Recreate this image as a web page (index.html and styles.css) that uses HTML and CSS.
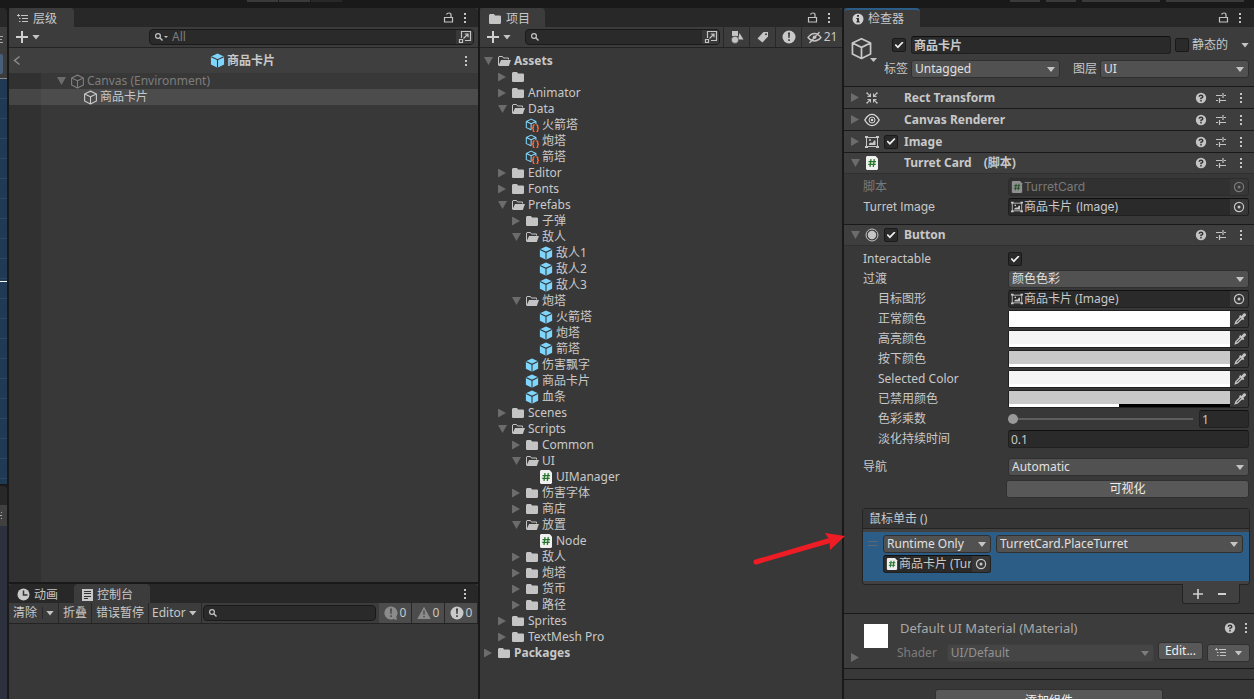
FILE: index.html
```html
<!DOCTYPE html>
<html lang="zh-CN">
<head>
<meta charset="utf-8">
<title>商品卡片</title>
<link rel="stylesheet" href="styles.css">
</head>
<body>
<svg class="defs" aria-hidden="true">
  <symbol id="i-folder" viewBox="0 0 14 14"><path fill="#c4c4c4" d="M1 3 2 2h4l1 1.400h5.200l.8.800V11l-.8 1H1.800L1 11.200z"/></symbol>
  <symbol id="i-open" viewBox="0 0 14 14"><path fill="none" stroke="#c4c4c4" d="M1.500 11V3l.5-.5h3.500l1 1.500h5V5.500"/><path fill="#c4c4c4" d="M4 6h10l-2.200 6H1.300z"/></symbol>
  <symbol id="i-cube" viewBox="0 0 16 16"><path fill="#7fd6fd" d="M8 .5 15 3.800v8.400L8 15.700 1 12.200V3.800z"/><path fill="none" stroke="#383838" stroke-width="1.200" d="M1.300 4 8 7.200 14.700 4M8 7.200V15.700"/></symbol>
  <symbol id="i-cubeo" viewBox="0 0 16 16"><path fill="none" stroke="currentColor" stroke-width="1.200" stroke-linejoin="round" d="M8 1.200 14.300 4.200v7.600L8 14.900 1.700 11.800V4.200zM1.700 4.200 8 7.200l6.300-3M8 7.200v7.700"/></symbol>
  <symbol id="i-so" viewBox="0 0 16 16"><path fill="none" stroke="#7fd6fd" stroke-width="1.200" stroke-linejoin="round" d="M7 13.500 1.500 11V4L7 1.300 12.500 4v3M1.500 4 7 6.500 12.500 4M7 6.500v7"/><path fill="none" stroke="#ff6a3c" stroke-width="1.500" d="M11 8h-.8l-.7.7v2.300l-1 .8 1 .8v2.200l.7.7h.8M13 8h.8l.7.7v2.300l1 .8-1 .8v2.200l-.7.7H13"/></symbol>
  <symbol id="i-cs" viewBox="0 0 14 14"><path fill="#f0f0f0" d="M1 1 2 0h8.500L13 2.500V13l-1 1H2l-1-1z"/><path fill="none" stroke="#24752b" stroke-width="1.300" d="M6 3.200 5 10.800M9.300 3.200 8.300 10.800M3.500 5.600h7.500M3.200 8.400h7.500"/></symbol>
  <symbol id="i-img" viewBox="0 0 14 14"><path fill="none" stroke="currentColor" d="M1.500 2.500h11v9h-11z"/><path fill="currentColor" d="M0 1h3v2H0zM11 1h3v2h-3zM0 11h3v2H0zM11 11h3v2h-3zM4 10V8.500l2-1 1.500.5L9.500 5l1 1v4z"/><circle cx="5" cy="5" r="1" fill="currentColor"/></symbol>
  <symbol id="i-lock" viewBox="0 0 12 12"><path fill="none" stroke="#c4c4c4" stroke-width="1.200" d="M2.500 5.500h8v4.500h-8zM9 5.500V3Q9 1 7 1T4.500 2.500"/></symbol>
  <symbol id="i-dots" viewBox="0 0 4 12"><path fill="#c4c4c4" d="M1 1h2v2H1zM1 5h2v2H1zM1 9h2v2H1z"/></symbol>
  <symbol id="i-plus" viewBox="0 0 12 12"><path stroke="#d0d0d0" stroke-width="2" d="M6 0v12M0 6h12"/></symbol>
  <symbol id="i-lens" viewBox="0 0 10 10"><circle cx="4" cy="4" r="2.400" fill="none" stroke="#c4c4c4" stroke-width="1.200"/><path stroke="#c4c4c4" stroke-width="1.400" d="M5.800 5.800 8.500 8.500"/></symbol>
  <symbol id="i-pop" viewBox="0 0 14 14"><path fill="none" stroke="#c4c4c4" stroke-width="1.200" d="M3.500 8V1.500h9v9H7M1.500 9.500h3v3h-3zM5.500 8.500l4.500-4.500M6.800 4H10v3.200"/></symbol>
  <symbol id="i-list" viewBox="0 0 12 12"><path stroke="#c4c4c4" d="M0 2.500h3M4 2.500h7M2 5.500h1.500M5 5.500h6M2 8.500h1.500M5 8.500h6M1.500 1v2.500"/></symbol>
  <symbol id="i-help" viewBox="0 0 12 12"><circle cx="6" cy="6" r="5.200" fill="#c4c4c4"/><path fill="none" stroke="#333" stroke-width="1.500" d="M4.200 4.800Q4.300 3.200 6 3.200t1.800 1.500Q7.800 5.500 6 6.300V7.200M6 8v1.400"/></symbol>
  <symbol id="i-preset" viewBox="0 0 12 12"><path fill="none" stroke="#c4c4c4" stroke-width="1.200" d="M1 3.500h6M9 3.500h2M8 1v5M1 8.500h2M5 8.500h6M4.500 6v5"/></symbol>
  <symbol id="i-target" viewBox="0 0 12 12"><circle cx="6" cy="6" r="4.600" fill="none" stroke="currentColor" stroke-width="1.200"/><circle cx="6" cy="6" r="1.500" fill="currentColor"/></symbol>
  <symbol id="i-drop" viewBox="0 0 12 12"><path fill="none" stroke="#c4c4c4" stroke-width="1.400" d="M6.500 4 2 8.500 1.300 10.700 3.500 10 8 5.500"/><path fill="#c4c4c4" d="M5 3.200 6.300 2l1.200 1L9.300.8Q10.600-.3 11.600.7t-.1 2.200L9.300 4.700l1 1.200L9 7.200z"/></symbol>
  <symbol id="i-excl" viewBox="0 0 14 14"><circle cx="7" cy="7" r="6.500" fill="#c9c9c9"/><path fill="#383838" d="M6 2.500h2L7.600 8H6.400zM6.200 9.300h1.600v1.700H6.200z"/></symbol>
  <symbol id="i-err" viewBox="0 0 14 14"><path fill="#8b8b8b" d="M7 .5a6.500 6.500 0 0 1 5.300 10.200L13 14l-3.600-1A6.500 6.500 0 1 1 7 .5z"/><path fill="#4c4c4c" d="M6 2.500h2L7.600 8H6.400zM6.200 9.300h1.600v1.700H6.200z"/></symbol>
  <symbol id="i-warn" viewBox="0 0 14 14"><path fill="#8b8b8b" d="M7 .8 13.700 13H.3z"/><path fill="#4c4c4c" d="M6.200 4.500h1.600L7.500 9h-1zM6.300 10h1.400v1.500H6.300z"/></symbol>
  <symbol id="i-info" viewBox="0 0 12 12"><circle cx="6" cy="6" r="5.500" fill="#d0d0d0"/><path fill="#333" d="M5 2h2v1.800H5zM4.300 5H7v3.500h.8v1H4.300v-1H5V6h-.7z"/></symbol>
</svg>

<div class="app">
  <header class="topbar">
    <span class="stub s1"></span><span class="stub s1"></span><span class="stub s1 dim"></span>
    <span class="fill"></span>
    <span class="stub s2"></span><span class="stub s2"></span><span class="stub s3"></span><span class="stub s3"></span>
  </header>

  <div class="strip" aria-hidden="true">
    <div class="strip-tab"></div>
    <div class="strip-tool"><svg width="3" height="9"><path stroke="#aaa" d="M0 1.500h3M0 4.500h2M0 7.500h3"/></svg><span class="strip-btn"></span></div>
    <div class="strip-grid"></div>
    <div class="strip-tab low"></div>
    <div class="strip-foot"><svg width="3" height="9"><path stroke="#aaa" d="M1 1.500h1M0 4.500h2M1 7.500h1"/></svg></div>
    <div class="strip-scene"></div>
  </div>

  <div class="left">
    <section class="panel hierarchy">
      <div class="tabs">
        <button class="tab on w65"><svg width="12" height="12"><use href="#i-list"/></svg>层级</button>
        <span class="fill"></span>
        <svg width="12" height="12"><use href="#i-lock"/></svg><svg class="dots" width="4" height="12"><use href="#i-dots"/></svg>
      </div>
      <div class="toolbar">
        <button class="add" aria-label="新建"><svg width="12" height="12"><use href="#i-plus"/></svg><i class="tri"></i></button>
        <div class="search big"><svg width="10" height="10"><use href="#i-lens"/></svg><i class="tri tiny"></i><input type="text" placeholder="All" aria-label="搜索层级"><button aria-label="打开搜索"><svg width="14" height="14"><use href="#i-pop"/></svg></button></div>
      </div>
      <div class="crumb">
        <button aria-label="返回"><svg width="8" height="12" viewBox="0 0 8 12"><path fill="none" stroke="#8f8f8f" stroke-width="1.400" d="M6.500 1.500 1.500 5.500l5 4"/></svg></button>
        <strong><svg width="15" height="15"><use href="#i-cube"/></svg>商品卡片</strong>
        <svg class="dots" width="4" height="12"><use href="#i-dots"/></svg>
      </div>
      <ul class="scene">
        <li class="ghost"><i class="fold open"></i><svg width="15" height="15"><use href="#i-cubeo"/></svg><span>Canvas (Environment)</span></li>
        <li class="sel"><svg width="15" height="15"><use href="#i-cubeo"/></svg>商品卡片</li>
      </ul>
    </section>

    <section class="panel console">
      <div class="tabs">
        <button class="tab w65"><svg width="13" height="13" viewBox="0 0 13 13"><circle cx="6.500" cy="6.500" r="6" fill="#c9c9c9"/><path fill="none" stroke="#333" stroke-width="1.500" d="M6.500 2.500v4.500h4"/></svg>动画</button>
        <button class="tab on w76"><svg width="11" height="12" viewBox="0 0 11 12"><path fill="#c9c9c9" d="M0 0h11v12H0z"/><path stroke="#333" d="M2 2.500h7M2 4.500h7M2 7.500h7M2 9.500h4"/></svg>控制台</button>
        <span class="fill"></span>
        <svg class="dots" width="4" height="12"><use href="#i-dots"/></svg>
      </div>
      <div class="ctool">
        <button>清除<i class="bar"></i><i class="tri"></i></button>
        <button>折叠</button><button>错误暂停</button>
        <button class="ed">Editor<i class="tri"></i></button>
        <div class="search"><svg width="10" height="10"><use href="#i-lens"/></svg><input type="text" aria-label="搜索日志"></div>
        <button class="count"><svg width="14" height="14"><use href="#i-err"/></svg>0</button>
        <button class="count"><svg width="14" height="14"><use href="#i-warn"/></svg>0</button>
        <button class="count"><svg width="14" height="14"><use href="#i-excl"/></svg>0</button>
      </div>
    </section>
  </div>

  <section class="panel project">
    <div class="tabs">
      <button class="tab on w65"><svg width="14" height="14"><use href="#i-folder"/></svg>项目</button>
      <span class="fill"></span>
      <svg width="12" height="12"><use href="#i-lock"/></svg><svg class="dots" width="4" height="12"><use href="#i-dots"/></svg>
    </div>
    <div class="toolbar">
      <button class="add" aria-label="新建"><svg width="12" height="12"><use href="#i-plus"/></svg><i class="tri"></i></button>
      <div class="search mid"><svg width="10" height="10"><use href="#i-lens"/></svg><input type="text" aria-label="搜索项目"><button aria-label="打开搜索"><svg width="14" height="14"><use href="#i-pop"/></svg></button></div>
      <button class="tb" aria-label="按类型"><svg width="14" height="14" viewBox="0 0 14 14"><path fill="#c4c4c4" d="M2 1h6v5H2zM9.500 3l4 6.500H8z"/><circle cx="5" cy="9.800" r="3.600" fill="#c4c4c4" stroke="#3c3c3c" stroke-width=".6"/></svg></button>
      <button class="tb" aria-label="按标签"><svg width="14" height="14" viewBox="0 0 14 14"><path fill="#c4c4c4" d="M7.500 2H12v4.500L6.500 12.500 1.500 8.500z"/><circle cx="10" cy="4.200" r="1" fill="#3c3c3c"/></svg></button>
      <button class="tb" aria-label="重要"><svg width="14" height="14"><use href="#i-excl"/></svg></button>
      <button class="tb wide"><svg width="15" height="14" viewBox="0 0 15 14"><path fill="none" stroke="#c4c4c4" stroke-width="1.300" d="M1 7.500Q4 3.500 7.500 3.500T14 7.500Q11 11 7.500 11T1 7.500zM2.500 13 12.500 2"/><circle cx="7.500" cy="7.200" r="1.800" fill="#c4c4c4"/></svg>21</button>
    </div>
    <ul class="tree">
      <li class="l0"><i class="fold open"></i><svg><use href="#i-open"/></svg><b>Assets</b></li>
      <li class="l1"><i class="fold"></i><svg><use href="#i-folder"/></svg></li>
      <li class="l1"><i class="fold"></i><svg><use href="#i-folder"/></svg>Animator</li>
      <li class="l1"><i class="fold open"></i><svg><use href="#i-open"/></svg>Data</li>
      <li class="l2"><i class="fold none"></i><svg><use href="#i-so"/></svg>火箭塔</li>
      <li class="l2"><i class="fold none"></i><svg><use href="#i-so"/></svg>炮塔</li>
      <li class="l2"><i class="fold none"></i><svg><use href="#i-so"/></svg>箭塔</li>
      <li class="l1"><i class="fold"></i><svg><use href="#i-folder"/></svg>Editor</li>
      <li class="l1"><i class="fold"></i><svg><use href="#i-folder"/></svg>Fonts</li>
      <li class="l1"><i class="fold open"></i><svg><use href="#i-open"/></svg>Prefabs</li>
      <li class="l2"><i class="fold"></i><svg><use href="#i-folder"/></svg>子弹</li>
      <li class="l2"><i class="fold open"></i><svg><use href="#i-open"/></svg>敌人</li>
      <li class="l3"><i class="fold none"></i><svg><use href="#i-cube"/></svg>敌人1</li>
      <li class="l3"><i class="fold none"></i><svg><use href="#i-cube"/></svg>敌人2</li>
      <li class="l3"><i class="fold none"></i><svg><use href="#i-cube"/></svg>敌人3</li>
      <li class="l2"><i class="fold open"></i><svg><use href="#i-open"/></svg>炮塔</li>
      <li class="l3"><i class="fold none"></i><svg><use href="#i-cube"/></svg>火箭塔</li>
      <li class="l3"><i class="fold none"></i><svg><use href="#i-cube"/></svg>炮塔</li>
      <li class="l3"><i class="fold none"></i><svg><use href="#i-cube"/></svg>箭塔</li>
      <li class="l2"><i class="fold none"></i><svg><use href="#i-cube"/></svg>伤害飘字</li>
      <li class="l2"><i class="fold none"></i><svg><use href="#i-cube"/></svg>商品卡片</li>
      <li class="l2"><i class="fold none"></i><svg><use href="#i-cube"/></svg>血条</li>
      <li class="l1"><i class="fold"></i><svg><use href="#i-folder"/></svg>Scenes</li>
      <li class="l1"><i class="fold open"></i><svg><use href="#i-open"/></svg>Scripts</li>
      <li class="l2"><i class="fold"></i><svg><use href="#i-folder"/></svg>Common</li>
      <li class="l2"><i class="fold open"></i><svg><use href="#i-open"/></svg>UI</li>
      <li class="l3"><i class="fold none"></i><svg><use href="#i-cs"/></svg>UIManager</li>
      <li class="l2"><i class="fold"></i><svg><use href="#i-folder"/></svg>伤害字体</li>
      <li class="l2"><i class="fold"></i><svg><use href="#i-folder"/></svg>商店</li>
      <li class="l2"><i class="fold open"></i><svg><use href="#i-open"/></svg>放置</li>
      <li class="l3"><i class="fold none"></i><svg><use href="#i-cs"/></svg>Node</li>
      <li class="l2"><i class="fold"></i><svg><use href="#i-folder"/></svg>敌人</li>
      <li class="l2"><i class="fold"></i><svg><use href="#i-folder"/></svg>炮塔</li>
      <li class="l2"><i class="fold"></i><svg><use href="#i-folder"/></svg>货币</li>
      <li class="l2"><i class="fold"></i><svg><use href="#i-folder"/></svg>路径</li>
      <li class="l1"><i class="fold"></i><svg><use href="#i-folder"/></svg>Sprites</li>
      <li class="l1"><i class="fold"></i><svg><use href="#i-folder"/></svg>TextMesh Pro</li>
      <li class="l0"><i class="fold"></i><svg><use href="#i-folder"/></svg><b>Packages</b></li>
    </ul>
    <svg class="arrow" width="94" height="34" viewBox="0 0 94 34"><path stroke="#ee1c24" stroke-width="5" stroke-linecap="round" d="M4 30 76 9"/><path fill="#ee1c24" d="M93 4 73 1l4.500 7L78 18z"/></svg>
  </section>

  <section class="panel inspector">
    <div class="tabs">
      <button class="tab on focus w76"><svg width="12" height="12"><use href="#i-info"/></svg>检查器</button>
      <span class="fill"></span>
      <svg width="12" height="12"><use href="#i-lock"/></svg><svg class="dots" width="4" height="12"><use href="#i-dots"/></svg>
    </div>

    <div class="object">
      <div class="objicon"><svg width="23" height="23"><use href="#i-cubeo"/></svg><i class="tri"></i></div>
      <div class="objmain">
        <div class="objrow">
          <input type="checkbox" checked aria-label="启用"><input class="field name" type="text" value="商品卡片" aria-label="名称">
          <label class="static"><input type="checkbox">静态的</label><i class="tri"></i>
        </div>
        <div class="objrow two">
          <label for="tag">标签</label><span class="dd"><select id="tag"><option>Untagged</option></select></span>
          <label for="layer">图层</label><span class="dd"><select id="layer"><option>UI</option></select></span>
        </div>
      </div>
    </div>

    <div class="comp"><i class="fold"></i><svg width="14" height="14" viewBox="0 0 14 14"><path fill="#c4c4c4" d="M6 6H2.500V5L4 4.600 1 2.200 2.200 1 4.600 4 5 2.500h1zM8 6h3.500V5L10 4.600l3-2.400L11.800 1 9.400 4 9 2.500H8zM6 8H2.500v1l1.500.4-3 2.400L2.200 13l2.400-3 .4 1.500h1zM8 8h3.500v1l-1.500.4 3 2.400-1.200 1.200-2.400-3-.4 1.500H8z"/></svg><span class="slot"></span><h2>Rect Transform</h2><svg class="r" width="12" height="12"><use href="#i-help"/></svg><svg class="r" width="12" height="12"><use href="#i-preset"/></svg><svg width="4" height="12"><use href="#i-dots"/></svg></div>
    <div class="comp"><i class="fold"></i><svg width="16" height="14" viewBox="0 0 16 14"><path fill="none" stroke="#d8d8d8" stroke-width="1.400" d="M.8 7Q4 1.400 8 1.400T15.200 7Q12 12.600 8 12.600T.8 7z"/><circle cx="8" cy="7" r="3" fill="none" stroke="#d8d8d8"/><circle cx="8" cy="7" r="1.300" fill="#d8d8d8"/></svg><span class="slot"></span><h2>Canvas Renderer</h2><svg class="r" width="12" height="12"><use href="#i-help"/></svg><svg class="r" width="12" height="12"><use href="#i-preset"/></svg><svg width="4" height="12"><use href="#i-dots"/></svg></div>
    <div class="comp"><i class="fold"></i><svg width="14" height="14"><use href="#i-img"/></svg><input class="slot" type="checkbox" checked aria-label="启用 Image"><h2>Image</h2><svg class="r" width="12" height="12"><use href="#i-help"/></svg><svg class="r" width="12" height="12"><use href="#i-preset"/></svg><svg width="4" height="12"><use href="#i-dots"/></svg></div>
    <div class="comp ex"><i class="fold open"></i><svg width="14" height="14"><use href="#i-cs"/></svg><span class="slot"></span><h2>Turret Card<span class="cn">(脚本)</span></h2><svg class="r" width="12" height="12"><use href="#i-help"/></svg><svg class="r" width="12" height="12"><use href="#i-preset"/></svg><svg width="4" height="12"><use href="#i-dots"/></svg></div>
    <div class="props p1">
      <div class="prop off"><span>脚本</span><div class="field obj inter"><svg width="12" height="12"><use href="#i-cs"/></svg><span>TurretCard</span><button aria-label="选择脚本"><svg width="12" height="12"><use href="#i-target"/></svg></button></div></div>
      <div class="prop"><span class="inter">Turret Image</span><div class="field obj inter"><svg width="12" height="12"><use href="#i-img"/></svg><span>商品卡片 (Image)</span><button aria-label="选择图像"><svg width="12" height="12"><use href="#i-target"/></svg></button></div></div>
    </div>

    <div class="comp ex"><i class="fold open"></i><svg width="14" height="14" viewBox="0 0 14 14"><circle cx="7" cy="7" r="6" fill="none" stroke="#c4c4c4"/><circle cx="7" cy="7" r="4.200" fill="#c4c4c4"/></svg><input class="slot" type="checkbox" checked aria-label="启用 Button"><h2>Button</h2><svg class="r" width="12" height="12"><use href="#i-help"/></svg><svg class="r" width="12" height="12"><use href="#i-preset"/></svg><svg width="4" height="12"><use href="#i-dots"/></svg></div>
    <div class="props p2">
      <div class="prop"><label for="inter">Interactable</label><input id="inter" type="checkbox" checked></div>
      <div class="prop"><label for="trans">过渡</label><span class="dd"><select id="trans"><option>颜色色彩</option></select></span></div>
      <div class="prop sub"><span>目标图形</span><div class="field obj"><svg width="12" height="12"><use href="#i-img"/></svg><span>商品卡片 (Image)</span><button aria-label="选择目标图形"><svg width="12" height="12"><use href="#i-target"/></svg></button></div></div>
      <div class="prop sub"><span>正常颜色</span><div class="color"><button class="sw white" aria-label="正常颜色"></button><button class="pick" aria-label="取色"><svg width="12" height="12"><use href="#i-drop"/></svg></button></div></div>
      <div class="prop sub"><span>高亮颜色</span><div class="color"><button class="sw light" aria-label="高亮颜色"></button><button class="pick" aria-label="取色"><svg width="12" height="12"><use href="#i-drop"/></svg></button></div></div>
      <div class="prop sub"><span>按下颜色</span><div class="color"><button class="sw grey" aria-label="按下颜色"></button><button class="pick" aria-label="取色"><svg width="12" height="12"><use href="#i-drop"/></svg></button></div></div>
      <div class="prop sub"><span>Selected Color</span><div class="color"><button class="sw light" aria-label="Selected Color"></button><button class="pick" aria-label="取色"><svg width="12" height="12"><use href="#i-drop"/></svg></button></div></div>
      <div class="prop sub"><span>已禁用颜色</span><div class="color"><button class="sw grey half" aria-label="已禁用颜色"></button><button class="pick" aria-label="取色"><svg width="12" height="12"><use href="#i-drop"/></svg></button></div></div>
      <div class="prop sub"><label for="mul">色彩乘数</label><div class="slide"><input id="mul" type="range" min="1" max="5" value="1"><input class="field" type="text" value="1" aria-label="色彩乘数值"></div></div>
      <div class="prop sub"><label for="fade">淡化持续时间</label><input id="fade" class="field" type="text" value="0.1"></div>
      <div class="prop nav"><label for="nav">导航</label><span class="dd"><select id="nav"><option>Automatic</option></select></span></div>
      <div class="prop vis"><span></span><button class="btn">可视化</button></div>

      <div class="event">
        <div class="evhead">鼠标单击 ()</div>
        <div class="evrow">
          <svg class="grip" width="10" height="6"><path stroke="#5f6870" d="M0 .5h10M0 4.500h10"/></svg>
          <div class="evleft">
            <span class="dd"><select aria-label="调用时机"><option>Runtime Only</option></select></span>
            <div class="field obj"><svg width="12" height="12"><use href="#i-cs"/></svg><span>商品卡片 (TurretCard)</span><button aria-label="选择对象"><svg width="12" height="12"><use href="#i-target"/></svg></button></div>
          </div>
          <span class="dd"><select aria-label="函数"><option>TurretCard.PlaceTurret</option></select></span>
        </div>
      </div>
      <div class="evfoot"><button aria-label="添加"><svg width="10" height="10"><use href="#i-plus"/></svg></button><button aria-label="移除"><svg width="8" height="10" viewBox="0 0 8 10"><path stroke="#d0d0d0" stroke-width="2" d="M0 5h8"/></svg></button></div>
    </div>

    <div class="material">
      <div class="preview"><span></span><i class="fold"></i></div>
      <div class="matmain">
        <div class="mathead"><h3>Default UI Material (Material)</h3><svg width="12" height="12"><use href="#i-help"/></svg><svg width="4" height="12"><use href="#i-dots"/></svg></div>
        <div class="shader"><label for="shader">Shader</label><span class="dd faded"><select id="shader" disabled><option>UI/Default</option></select></span><button class="btn edit">Edit...</button><button class="btn menu" aria-label="菜单"><svg width="12" height="12"><use href="#i-list"/></svg><i class="tri"></i></button></div>
      </div>
    </div>
    <div class="spacer"></div>
    <div class="addwrap"><button class="btn">添加组件</button></div>
  </section>
</div>
</body>
</html>
```
FILE: styles.css
```css
* { box-sizing: border-box; }
body {
  margin: 0;
  height: 100vh;
  overflow: hidden;
  background: #191919;
  color: #c8c8c8;
  font: 12px/16px "Noto Sans", "Noto Sans CJK SC", sans-serif;
}
.defs { position: absolute; width: 0; height: 0; }
svg { flex: none; display: block; }
button, input, select { font: inherit; color: inherit; margin: 0; padding: 0; border: 0; background: none; min-width: 0; }
button { display: flex; align-items: center; justify-content: center; white-space: nowrap; }
ul { list-style: none; margin: 0; padding: 0; }
h2, h3 { margin: 0; font-size: 12px; line-height: 16px; }
.inter { font-family: Inter, "Noto Sans CJK SC", sans-serif; }
.fill { flex: 1; }
.tri { width: 8px; height: 5px; background: #c4c4c4; clip-path: polygon(0 0, 100% 0, 50% 100%); flex: none; }
.tri.tiny { width: 4px; height: 2px; }
.fold { width: 8px; height: 9px; background: #6c6c6c; clip-path: polygon(0 0, 100% 50%, 0 100%); flex: none; }
.fold.open { width: 9px; height: 8px; margin-right: -1px; clip-path: polygon(0 0, 100% 0, 50% 100%); }
.fold.none { visibility: hidden; }

.app {
  display: grid;
  grid-template-columns: 7px 469fr 362fr 410fr;
  grid-template-rows: 8px minmax(0, 1fr);
  column-gap: 2px;
  height: 100vh;
}
.topbar { grid-column: 1 / -1; display: flex; gap: 1px; align-items: flex-start; padding: 0 10px 0 247px; }
.stub { height: 2px; background: #3a3a3a; width: 31px; }
.stub.dim { background: #282828; }
.s2 { width: 30px; margin-right: 5px; }
.s3 { width: 78px; }
.s3 + .s3 { margin-left: 5px; }

.strip { display: flex; flex-direction: column; }
.strip-tab { height: 19px; background: #282828; border-radius: 0 4px 0 0; flex: none; }
.strip-tab.low { margin-top: 2px; }
.strip-tool { height: 52px; background: #3c3c3c; padding-top: 8px; border-bottom: 1px solid #888; flex: none; }
.strip-btn { display: block; width: 3px; height: 20px; margin-top: 10px; background: #46607c; border-radius: 0 2px 2px 0; }
.strip-grid {
  height: 405px; flex: none;
  background: linear-gradient(#fff, #fff) 0 202px / 7px 1px no-repeat, repeating-linear-gradient(#203a56 0 19px, #2f455c 19px 20px);
}
.strip-foot { height: 21px; background: #404040; padding-top: 6px; flex: none; }
.strip-scene { flex: 1; background: #2c313d; }

.left { display: flex; flex-direction: column; gap: 2px; min-height: 0; }
.panel { background: #383838; min-width: 0; }
.hierarchy { flex: 1; display: flex; flex-direction: column; }
.console { height: 115px; }
.tabs { display: flex; align-items: center; height: 19px; background: #282828; border-radius: 4px 4px 0 0; padding-right: 11px; }
.tabs .dots { margin-left: 9px; }
.tab { height: 19px; gap: 4px; justify-content: flex-start; padding: 2px 8px 0; border-radius: 4px 4px 0 0; }
.tab.on { background: #3c3c3c; }
.tab.focus { border-top: 2px solid #2c5d87; padding-top: 1px; }
.w65 { width: 65px; }
.w76 { width: 76px; }
.toolbar { display: flex; align-items: center; height: 21px; background: #3c3c3c; border-bottom: 1px solid #232323; }
.add { gap: 4px; padding-left: 7px; }
.search { display: flex; align-items: center; height: 16px; background: #2a2a2a; border: 1px solid #1a1a1a; border-radius: 4px; padding-left: 4px; overflow: hidden; }
.search input { flex: 1; width: 0; height: 14px; padding-left: 4px; line-height: 14px; }
.search input::placeholder { color: #7c7c7c; }
.search button { width: 17px; height: 16px; background: #383838; }
.big { flex: 1; margin: 0 4px 0 109px; }
.mid { flex: 1; margin: 0 3px 0 14px; }
.tb { width: 26px; height: 20px; border-left: 1px solid #282828; }
.tb.wide { width: 41px; gap: 2px; }
.crumb { display: flex; align-items: center; height: 25px; background: #3f3f3f; padding: 0 10px 0 4px; }
.crumb strong { flex: 1; display: flex; align-items: center; justify-content: center; gap: 2px; }
.scene { flex: 1; background: linear-gradient(90deg, #313131 32px, #383838 32px); }
.scene li { display: flex; align-items: center; height: 16px; gap: 2px; }
.ghost { color: #7d7d7d; padding-left: 48px; }
.ghost .fold { margin-right: 2px; }
.sel { padding-left: 74px; background: rgba(255, 255, 255, .1); }

.ctool { display: flex; align-items: center; height: 21px; background: #3c3c3c; border-bottom: 1px solid #232323; }
.ctool > button { height: 20px; padding: 0 4px; border-right: 1px solid #282828; gap: 3px; }
.ctool .bar { width: 1px; height: 12px; background: #282828; margin-left: 2px; }
.ctool .ed { padding-left: 3px; }
.ctool .search { flex: 1; margin: 0 3px 0 1px; }
.ctool .count { width: 33px; background: #4c4c4c; padding: 0; gap: 2px; }

.project { position: relative; }
.tree { padding-top: 5px; }
.tree li { display: flex; align-items: center; height: 16px; padding-left: 4px; white-space: nowrap; }
.tree svg { width: 14px; height: 14px; margin: 0 3px 1px 5px; }
.tree .l1 { padding-left: 18px; }
.tree .l2 { padding-left: 32px; }
.tree .l3 { padding-left: 46px; }
.arrow { position: absolute; right: -4px; top: 524px; z-index: 2; }

.inspector .tabs { padding-right: 12px; }
input[type="checkbox"] { appearance: none; flex: none; width: 14px; height: 14px; background: #2a2a2a; border: 1px solid #191919; border-radius: 2px; display: grid; place-items: center; }
input[type="checkbox"]:checked::before { content: ""; width: 9px; height: 7px; background: #eee; clip-path: polygon(0 50%, 16% 36%, 36% 66%, 86% 0, 100% 14%, 38% 100%); }
.field { height: 18px; width: 100%; background: #2a2a2a; border: 1px solid #202020; border-top-color: #101010; border-radius: 3px; padding: 0 2px; }
.dd { position: relative; display: flex; min-width: 0; flex: 1; }
.dd::after { content: ""; position: absolute; right: 5px; top: 7px; width: 8px; height: 5px; background: #c4c4c4; clip-path: polygon(0 0, 100% 0, 50% 100%); pointer-events: none; }
.dd select { appearance: none; width: 100%; height: 18px; background: #515151; border: 1px solid #303030; border-radius: 3px; padding: 0 16px 0 3px; line-height: 16px; opacity: 1; color: #e0e0e0; }
.btn { height: 18px; background: #585858; border: 1px solid #303030; border-radius: 3px; color: #eee; }

.object { display: flex; height: 59px; background: #3c3c3c; padding: 9px 5px 0 6px; }
.objicon { width: 35px; padding-top: 1px; flex: none; }
.objicon .tri { display: block; width: 7px; height: 4px; margin: -2px 0 0 20px; }
.objmain { flex: 1; display: flex; flex-direction: column; gap: 6px; min-width: 0; padding-left: 7px; }
.objrow { display: flex; align-items: center; }
.objrow .name { flex: 1; margin: 0 4px 0 5px; font-weight: bold; }
.static { display: flex; align-items: center; gap: 3px; margin-right: 13px; }
.two { margin-left: -8px; }
.two label { margin-right: 3px; }
.two .dd + label { margin-left: 13px; }

.comp { display: flex; align-items: center; height: 22px; background: #3e3e3e; border-top: 1px solid #191919; padding: 0 11px 0 7px; }
.comp.ex { border-bottom: 1px solid #303030; }
.comp > svg:nth-child(2) { margin: 0 5px 0 6px; }
.comp > svg[width="16"]:nth-child(2) { margin: 0 4px 0 5px; }
.comp h2 { flex: 1; margin-left: 6px; }
.comp .cn { margin-left: 12px; }
.comp .r { margin-right: 8px; }
.comp .r + .r { margin-right: 12px; }
.slot { width: 14px; flex: none; }
.p1 { height: 50px; padding-top: 3px; }
.p2 { padding-top: 3px; }
.prop { display: grid; grid-template-columns: 145px minmax(0, 1fr); align-items: center; height: 20px; padding: 0 5px 0 19px; }
.prop.sub { padding-left: 34px; grid-template-columns: 130px minmax(0, 1fr); }
.prop.off { color: #7a7a7a; }
.prop.off .field { background: #313131; border-color: #2c2c2c; }
.prop.off .field > svg { opacity: .5; }
.prop.nav { margin-top: 8px; }
.prop.vis { height: 22px; margin-top: 1px; grid-template-columns: 143px minmax(0, 1fr); }
.obj { display: flex; align-items: center; padding: 0 0 0 2px; gap: 1px; overflow: hidden; }
.obj > span { flex: 1; white-space: pre; overflow: hidden; }
.obj > button { width: 18px; height: 16px; background: #373737; flex: none; }
.color { display: flex; height: 18px; border: 1px solid #202020; border-radius: 2px; }
.sw { flex: 1; height: 16px; background: linear-gradient(#fff, #fff) left bottom / 100% 3px no-repeat; }
.sw.white { background-color: #fff; }
.sw.light { background-color: #f5f5f5; }
.sw.grey { background-color: #c8c8c8; }
.sw.half { background-image: linear-gradient(90deg, #fff 50%, #000 50%); }
.pick { width: 18px; padding-left: 2px; }
.slide { display: flex; align-items: center; gap: 6px; }
.slide .field { width: 50px; flex: none; }
input[type="range"] { appearance: none; flex: 1; height: 10px; background: linear-gradient(#5e5e5e, #5e5e5e) center / 100% 2px no-repeat; }
input[type="range"]::-webkit-slider-thumb { appearance: none; width: 10px; height: 10px; border-radius: 50%; background: #999; }

.event { margin: 8px 4px 0 18px; border: 1px solid #232323; border-radius: 3px; background: #414141; padding-bottom: 3px; }
.evhead { height: 20px; line-height: 20px; padding-left: 6px; background: #353535; border-bottom: 1px solid #232323; }
.evrow { display: flex; gap: 5px; margin-top: 3px; height: 49px; background: #2c5d87; padding: 3px 6px 0 5px; }
.grip { margin: 6px 0 0; }
.evleft { display: flex; flex-direction: column; gap: 2px; width: 108px; flex: none; }
.evleft .dd { flex: none; }
.evfoot { display: flex; align-items: center; justify-content: space-around; width: 58px; height: 20px; margin: -1px 14px 0 auto; background: #414141; border: 1px solid #232323; border-top: 0; border-radius: 0 0 3px 3px; padding: 0 6px 0 2px; }

.material { display: flex; height: 55px; margin-top: 9px; background: #3c3c3c; border-top: 1px solid #191919; padding-left: 7px; }
.preview { width: 46px; flex: none; padding-top: 10px; }
.preview span { display: block; width: 24px; height: 24px; margin-left: 13px; background: #fff; }
.preview .fold { display: block; margin-top: 5px; }
.matmain { flex: 1; min-width: 0; padding-top: 6px; }
.mathead { display: flex; align-items: center; gap: 8px; padding: 0 6px 0 3px; }
.mathead h3 { flex: 1; font-weight: normal; font-size: 13px; color: #a8a8a8; }
.shader { display: flex; align-items: center; padding: 8px 4px 0 0; gap: 4px; }
.shader label { color: #7d7d7d; margin-right: 6px; }
.faded select { background: #454545; border-color: #404040; color: #929292; }
.faded::after { background: #7d7d7d; }
.edit { width: 45px; margin-top: -4px; }
.menu { width: 43px; gap: 8px; }
.spacer { height: 12px; border: solid #191919; border-width: 1px 0; }
.addwrap { display: flex; justify-content: center; padding-top: 9px; }
.addwrap .btn { width: 228px; height: 24px; }
```
